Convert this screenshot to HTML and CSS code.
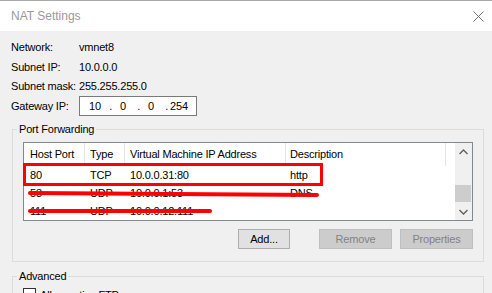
FILE: index.html
```html
<!DOCTYPE html>
<html lang="en">
<head>
    <meta charset="UTF-8">
    <title>NAT Settings</title>
    <link rel="stylesheet" href="styles.css">
</head>
<body>
<div class="dialog">
    <div class="titlebar">
        <span class="title">NAT Settings</span>
        <svg class="close" width="11" height="11" viewBox="0 0 11 11">
            <path d="M0.5 0.5 L10.5 10.5 M10.5 0.5 L0.5 10.5" stroke="#707070" stroke-width="1" fill="none"/>
        </svg>
    </div>

    <div class="content">
        <div class="info">
            <span>Network:</span><span>vmnet8</span>
            <span>Subnet IP:</span><span>10.0.0.0</span>
            <span>Subnet mask:</span><span>255.255.255.0</span>
            <span class="gw">Gateway IP:</span>
            <div class="ipbox">
                <span class="oct">10</span><span class="dot">.</span>
                <span class="oct">0</span><span class="dot">.</span>
                <span class="oct">0</span><span class="dot">.</span>
                <span class="oct">254</span>
            </div>
        </div>

        <fieldset class="group pf">
            <legend>Port Forwarding</legend>
            <div class="list">
                <div class="table">
                    <div class="row head">
                        <span class="c1">Host Port</span>
                        <span class="c2">Type</span>
                        <span class="c3">Virtual Machine IP Address</span>
                        <span class="c4">Description</span>
                    </div>
                    <div class="row">
                        <span class="c1">80</span>
                        <span class="c2">TCP</span>
                        <span class="c3">10.0.0.31:80</span>
                        <span class="c4">http</span>
                    </div>
                    <div class="row">
                        <span class="c1">53</span>
                        <span class="c2">UDP</span>
                        <span class="c3">10.0.0.1:53</span>
                        <span class="c4">DNS</span>
                    </div>
                    <div class="row">
                        <span class="c1">111</span>
                        <span class="c2">UDP</span>
                        <span class="c3">10.0.0.12:111</span>
                        <span class="c4"></span>
                    </div>
                </div>
                <div class="scroll">
                    <div class="arrow">
                        <svg width="9" height="6" viewBox="0 0 9 6"><path d="M0.5 5 L4.5 1 L8.5 5" stroke="#606060" stroke-width="1.4" fill="none"/></svg>
                    </div>
                    <div class="track"><div class="thumb"></div></div>
                    <div class="arrow">
                        <svg width="9" height="6" viewBox="0 0 9 6"><path d="M0.5 1 L4.5 5 L8.5 1" stroke="#606060" stroke-width="1.4" fill="none"/></svg>
                    </div>
                </div>

                <!-- red marks drawn over the list -->
                <div class="mark frame"></div>
                <div class="mark line1"></div>
                <div class="mark line2"></div>
            </div>

            <div class="buttons">
                <button class="btn add">Add...</button>
                <button class="btn off remove">Remove</button>
                <button class="btn off">Properties</button>
            </div>
        </fieldset>

        <fieldset class="group adv">
            <legend>Advanced</legend>
            <label class="check"><span class="cbox"></span>Allow active FTP</label>
        </fieldset>
    </div>
</div>
</body>
</html>
```

FILE: styles.css
```css
* {
    box-sizing: border-box;
}
body {
    margin: 0;
    background: #f0f0f0;
    font-family: "Liberation Sans", Arial, sans-serif;
    font-size: 11px;
    letter-spacing: -0.2px;
    color: #000;
    overflow: hidden;
}
.dialog {
    width: 492px;
    height: 293px;
    overflow: hidden;
}

/* title bar */
.titlebar {
    height: 31px;
    background: #fff;
    border-top: 1px solid #a8a8a8;
    display: flex;
    align-items: center;
    justify-content: space-between;
    padding: 0 8px 0 11px;
}
.title {
    font-size: 12px;
    letter-spacing: 0;
    color: #9a9a9a;
}
.close {
    display: block;
}

.content {
    padding: 6px 8px 0 12px;
}

/* network info */
.info {
    display: grid;
    grid-template-columns: 68px auto;
    grid-template-rows: 20px 19px 19px 20px;
    align-items: center;
    margin-left: -1px;
}
.info .gw {
    margin-top: 2px;
}
.ipbox {
    margin-top: 2px;
    width: 118px;
    height: 20px;
    background: #fff;
    border: 1px solid #7a7a7a;
    display: flex;
    align-items: center;
    padding-left: 4px;
}
.oct {
    width: 22px;
    text-align: center;
}
.dot {
    width: 6px;
    text-align: right;
}

/* group boxes */
.group {
    margin: 7px 0 0 0;
    border: 1px solid #dcdcdc;
    padding: 6px 10px 12px 10px;
    min-width: 0;
}
.group legend {
    padding: 0 2px;
    margin-left: -6px;
    line-height: 14px;
}
.adv {
    margin-top: 7px;
    padding-top: 5px;
}

/* list view */
.list {
    position: relative;
    height: 79px;
    background: #fff;
    border: 1px solid #828790;
    display: flex;
    gap: 9px;
}
.table {
    width: 422px;
    overflow: hidden;
}
.row {
    display: flex;
    height: 18px;
    align-items: center;
    white-space: nowrap;
}
.row.head {
    height: 23px;
}
.row span {
    display: block;
    overflow: hidden;
}
.row.head span {
    height: 23px;
    line-height: 23px;
    border-right: 1px solid #e5e5e5;
}
.c1 { width: 61px; padding-left: 6px; }
.c2 { width: 40px; padding-left: 5px; }
.c3 { width: 161px; padding-left: 5px; }
.c4 { width: 160px; padding-left: 4px; }

.scroll {
    width: 17px;
    background: #f0f0f0;
    display: flex;
    flex-direction: column;
}
.arrow {
    height: 17px;
    display: flex;
    align-items: center;
    justify-content: center;
}
.arrow svg {
    display: block;
}
.track {
    flex: 1;
    display: flex;
    flex-direction: column;
    justify-content: flex-end;
}
.thumb {
    height: 17px;
    margin: 0 1px 1px 0;
    background: #cdcdcd;
}

/* red annotation */
.mark {
    position: absolute;
}
.frame {
    left: -1px;
    top: 20px;
    width: 300px;
    height: 23px;
    border: 3px solid #ff0000;
}
.line1 {
    left: 4px;
    top: 49px;
    width: 291px;
    height: 4px;
    background: #ff0000;
    border-radius: 2px;
    transform: rotate(0.35deg);
}
.line2 {
    left: 4px;
    top: 66px;
    width: 184px;
    height: 4px;
    background: #ff0000;
    border-radius: 2px;
}

/* buttons */
.buttons {
    display: flex;
    justify-content: flex-end;
    margin-top: 8px;
    gap: 8px;
}
.btn {
    height: 20px;
    font-family: "Liberation Sans", Arial, sans-serif;
    font-size: 11px;
    letter-spacing: -0.2px;
    padding: 0;
    background: #e1e1e1;
    border: 1px solid #adadad;
    color: #000;
}
.btn.add {
    width: 52px;
}
.btn.off {
    width: 73px;
    background: #cccccc;
    border-color: #bfbfbf;
    color: #838383;
}
.btn.remove {
    margin-left: 21px;
}

/* advanced */
.check {
    display: flex;
    align-items: center;
    gap: 4px;
}
.cbox {
    width: 13px;
    height: 13px;
    border: 1px solid #333;
    background: #fff;
}
```
